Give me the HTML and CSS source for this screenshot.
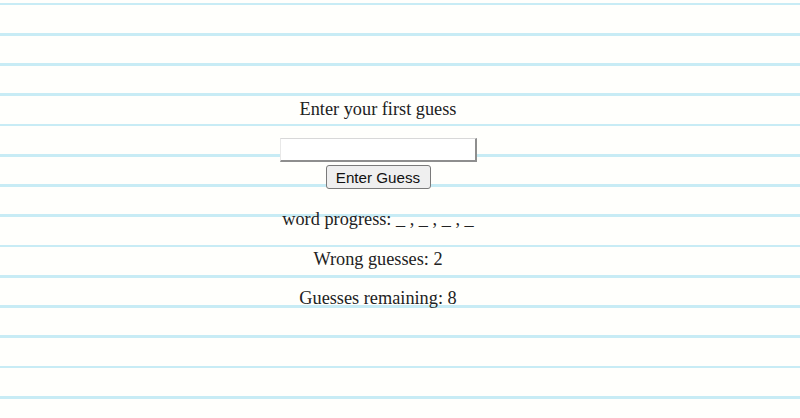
FILE: index.html
```html
<!DOCTYPE html>
<html lang="en">
<head>
<meta charset="utf-8">
<title>Hangman</title>
<link rel="stylesheet" href="styles.css">
</head>
<body>
<main class="game">
  <p class="prompt">Enter your first guess</p>
  <form class="guess-form">
    <input class="guess-input" type="text">
    <button class="guess-button" type="button">Enter Guess</button>
  </form>
  <p class="info">word progress: _ , _ , _ , _</p>
  <p class="info">Wrong guesses: 2</p>
  <p class="info">Guesses remaining: 8</p>
</main>
</body>
</html>
```

FILE: styles.css
```css
html, body {
  margin: 0;
  padding: 0;
}
body {
  width: 800px;
  height: 418px;
  overflow: hidden;
  background-color: #fffffc;
  background-image: repeating-linear-gradient(
    to bottom,
    transparent 0px,
    transparent 2.6px,
    #c8ecf5 2.6px,
    #c8ecf5 5.4px,
    transparent 5.4px,
    transparent 30.25px
  );
  font-family: "Liberation Serif", "Times New Roman", serif;
  color: #222;
}
.game {
  display: flex;
  flex-direction: column;
  align-items: center;
  padding-top: 99px;
  padding-right: 44px;
}
.prompt, .info {
  margin: 0;
  font-size: 18.3px;
  line-height: 21px;
  text-align: center;
}
.prompt {
  margin-bottom: 18px;
}
.guess-form {
  display: flex;
  flex-direction: column;
  align-items: center;
  gap: 3px;
  margin-bottom: 20px;
}
.guess-input {
  box-sizing: border-box;
  width: 197px;
  height: 24px;
  margin: 0;
  padding: 1px 2px;
  background: #fff;
  border-style: solid;
  border-width: 1px 2px 2px 1px;
  border-color: #d8d8d8 #8e8e8e #8e8e8e #e8e8e8;
}
.guess-button {
  box-sizing: border-box;
  width: 105px;
  height: 24px;
  margin: 0;
  padding: 0;
  font-family: "Liberation Sans", Arial, sans-serif;
  font-size: 15.2px;
  color: #111;
  background: #efefef;
  border: 1px solid #7a7a7a;
  border-radius: 3px;
}
.info + .info {
  margin-top: 18.5px;
}
```
